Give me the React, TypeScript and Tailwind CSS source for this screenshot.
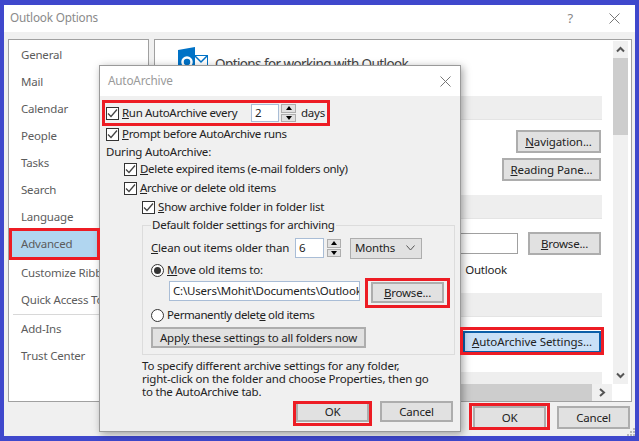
import React from "react";

const font = "font-['Noto_Sans',sans-serif]";

// ─── Small Win32-ish controls ────────────────────────────────────────────────

function Check() {
  return (
    <span className="w-[13px] h-[13px] shrink-0 border border-[#333] bg-white flex items-center justify-center">
      <svg width="11" height="11" viewBox="0 0 11 11" fill="none">
        <path d="M1 5.5 L4 8.5 L10 1.5" stroke="#444" strokeWidth="1.3" />
      </svg>
    </span>
  );
}

function Radio({ on }: { on?: boolean }) {
  return (
    <span className="w-[13px] h-[13px] shrink-0 rounded-full border border-[#333] bg-white flex items-center justify-center">
      {on && <span className="w-[7px] h-[7px] rounded-full bg-[#333]" />}
    </span>
  );
}

function Btn({ className, children }: { className: string; children: React.ReactNode }) {
  return (
    <div className={`flex items-center justify-center shrink-0 whitespace-nowrap border-2 border-[#adadad] bg-[#e1e1e1] text-[#222] ${className}`}>
      {children}
    </div>
  );
}

function Spinner({ className }: { className: string }) {
  return (
    <div className={`flex flex-col gap-px shrink-0 ${className}`}>
      <div className="flex-1 bg-[#e1e1e1] border border-[#adadad] flex items-center justify-center">
        <span className="w-0 h-0 border-x-[3px] border-x-transparent border-b-[4px] border-b-black" />
      </div>
      <div className="flex-1 bg-[#e1e1e1] border border-[#adadad] flex items-center justify-center">
        <span className="w-0 h-0 border-x-[3px] border-x-transparent border-t-[4px] border-t-black" />
      </div>
    </div>
  );
}

function CloseX({ color = "#777" }: { color?: string }) {
  return (
    <svg width="11" height="11" viewBox="0 0 11 11" fill="none">
      <path d="M0.5 0.5 L10.5 10.5 M10.5 0.5 L0.5 10.5" stroke={color} strokeWidth="1" />
    </svg>
  );
}

function Band({ className }: { className: string }) {
  return <div className={`w-[447px] h-[24px] shrink-0 bg-[#eeeeee] border-b border-[#e4e4e4] ${className}`} />;
}

// ─── Sidebar ─────────────────────────────────────────────────────────────────

function SideItem({ label, active }: { label: string; active?: boolean }) {
  return (
    <div className={`h-[27px] shrink-0 pl-[12px] flex items-center whitespace-nowrap text-[#5c5c5c] ${active ? "bg-[#b1d6f0] w-[85px] ml-[3px] !pl-[9px]" : ""}`}>
      {label}
    </div>
  );
}

function Sidebar() {
  return (
    <div className="w-[141px] h-[363px] shrink-0 border border-[#a0a0a0] bg-white pt-[1px] overflow-hidden">
      <div className="flex flex-col">
        {["General", "Mail", "Calendar", "People", "Tasks", "Search", "Language"].map((s) => (
          <SideItem key={s} label={s} />
        ))}
        <SideItem label="Advanced" active />
        <div className="h-[2px]" />
        <SideItem label="Customize Ribbon" />
        <SideItem label="Quick Access Toolbar" />
        <div className="h-px bg-[#d8d8d8] mx-[4px] mt-[1px]" />
        <SideItem label="Add-Ins" />
        <SideItem label="Trust Center" />
      </div>
    </div>
  );
}

// ─── Right-hand options panel ────────────────────────────────────────────────

function OptionsPanel() {
  return (
    <div className="w-[478px] h-[363px] shrink-0 border border-[#a0a0a0] bg-white ml-[5px] flex overflow-hidden">
      <div className="w-[458px] shrink-0 flex flex-col">
        <div className="h-[56px] shrink-0 flex pl-[23px] pt-[7px]">
          <svg width="30" height="30" viewBox="0 0 30 30" className="shrink-0">
            <rect x="16.5" y="8.5" width="13" height="13" fill="#fff" stroke="#0072c6" />
            <path d="M17 9 L23 15 L29 9" fill="none" stroke="#0072c6" strokeWidth="1.5" />
            <path d="M0 3 L17 0 V30 L0 27 Z" fill="#0072c6" />
            <circle cx="9" cy="15" r="4.5" fill="none" stroke="#fff" strokeWidth="2.5" />
          </svg>
          <span className="ml-[7px] mt-[7px] text-[13.5px] tracking-[-0.6px] text-[#444] whitespace-nowrap">Options for working with Outlook</span>
        </div>
        <Band className="" />
        <div className="flex flex-col items-end w-[446px] pt-[10px] gap-[5px]">
          <Btn className="w-[85px] h-[23px] tracking-[-0.1px]"><span><u>N</u>avigation...</span></Btn>
          <Btn className="w-[99px] h-[23px] tracking-[-0.1px]"><span><u>R</u>eading Pane...</span></Btn>
        </div>
        <Band className="mt-[14px]" />
        <div className="flex justify-end w-[446px] pt-[13px] gap-[10px]">
          <div className="w-[60px] h-[21px] mt-px border border-[#a0a0a0] bg-white" />
          <Btn className="w-[73px] h-[23px]"><span><u>B</u>rowse...</span></Btn>
        </div>
        <div className="w-[352px] text-right pt-[6px] h-[39px] text-[#222]">Outlook</div>
        <Band className="" />
        <div className="flex justify-end w-[446px] pt-[14px]">
          <div className="flex items-center justify-center w-[138px] h-[22px] border-2 border-[#0b5ea8] bg-[#c9e0f7] text-[#222] whitespace-nowrap tracking-[-0.05px]">
            <span><u>A</u>utoArchive Settings...</span>
          </div>
        </div>
        <div className="w-[447px] h-[12px] bg-[#eeeeee] mt-[19px] shrink-0" />
        <div className="w-[457px] h-[17px] shrink-0 flex bg-[#cdcdcd]">
          <div className="flex-1" />
          <div className="w-[20px] bg-[#f0f0f0] flex items-center justify-center">
            <svg width="7" height="9" viewBox="0 0 7 9" fill="none"><path d="M1 1 L5 4.5 L1 8" stroke="#555" strokeWidth="2" /></svg>
          </div>
        </div>
      </div>
      <div className="w-[15px] h-[343px] mt-px bg-[#f0f0f0] flex flex-col shrink-0">
        <div className="h-[17px] flex items-center justify-center">
          <svg width="9" height="7" viewBox="0 0 9 7" fill="none"><path d="M1 5.5 L4.5 2 L8 5.5" stroke="#555" strokeWidth="2" /></svg>
        </div>
        <div className="h-[77px] bg-[#cdcdcd]" />
        <div className="flex-1" />
        <div className="h-[17px] flex items-center justify-center">
          <svg width="9" height="7" viewBox="0 0 9 7" fill="none"><path d="M1 1.5 L4.5 5 L8 1.5" stroke="#555" strokeWidth="2" /></svg>
        </div>
      </div>
    </div>
  );
}

// ─── AutoArchive dialog ──────────────────────────────────────────────────────

function AutoArchiveDialog() {
  return (
    <div className="absolute left-[95px] top-[60px] w-[362px] h-[367px] border border-[#9a9a9a] bg-[#f0f0f0] shadow-[2px_2px_8px_rgba(0,0,0,0.35)] flex flex-col text-[#222]">
      <div className="h-[30px] shrink-0 bg-white flex items-center justify-between pl-[8px] pr-[9px]">
        <span className="text-[#9a9a9a] text-[11.75px]">AutoArchive</span>
        <CloseX />
      </div>
      <div className="flex flex-col pl-[6px]">
        <div className="h-[22px] mt-[6px] flex items-center gap-[3px]">
          <Check />
          <span className="w-[126px] whitespace-nowrap tracking-[-0.32px]"><u>R</u>un AutoArchive every</span>
          <div className="w-[28px] h-[18px] border border-[#a9bdd6] bg-white pl-[3px] leading-[16px]">2</div>
          <Spinner className="w-[15px] h-[18px] ml-[-1px]" />
          <span className="ml-[2px]">days</span>
        </div>
        <div className="h-[20px] flex items-center gap-[3px]">
          <Check />
          <span className="tracking-[-0.33px]"><u>P</u>rompt before AutoArchive runs</span>
        </div>
        <div className="h-[16px] flex items-center">During AutoArchive:</div>
        <div className="h-[18px] ml-[18px] flex items-center gap-[3px]">
          <Check />
          <span className="tracking-[-0.32px]"><u>D</u>elete expired items (e-mail folders only)</span>
        </div>
        <div className="h-[20px] ml-[18px] flex items-center gap-[3px]">
          <Check />
          <span className="tracking-[-0.3px]"><u>A</u>rchive or delete old items</span>
        </div>
        <div className="h-[18px] ml-[36px] flex items-center gap-[3px]">
          <Check />
          <span><u>S</u>how archive folder in folder list</span>
        </div>

        <div className="relative ml-[36px] mt-[9px] w-[313px] h-[130px] border border-[#dcdcdc] pl-[8px] flex flex-col">
          <span className="absolute left-[8px] top-[-9px] bg-[#f0f0f0] px-px leading-[16px] whitespace-nowrap tracking-[-0.25px]">Default folder settings for archiving</span>
          <div className="h-[22px] mt-[11px] flex items-center">
            <span className="w-[144px] whitespace-nowrap"><u>C</u>lean out items older than</span>
            <div className="w-[29px] h-[20px] border border-[#a9bdd6] bg-white pl-[3px] leading-[18px]">6</div>
            <Spinner className="w-[14px] h-[18px] ml-[3px]" />
            <div className="ml-[9px] w-[72px] h-[21px] border border-[#adadad] bg-[#e1e1e1] flex items-center justify-between pl-[4px] pr-[6px]">
              <span>Months</span>
              <svg width="9" height="6" viewBox="0 0 9 6" fill="none"><path d="M0.5 0.5 L4.5 5 L8.5 0.5" stroke="#555" /></svg>
            </div>
          </div>
          <div className="h-[22px] flex items-center gap-[3px]">
            <Radio on />
            <span><u>M</u>ove old items to:</span>
          </div>
          <div className="flex items-start ml-[18px] h-[22px]">
            <div className="w-[191px] h-[20px] border border-[#a9bdd6] bg-white pl-[3px] leading-[18px] whitespace-nowrap overflow-hidden">C:\Users\Mohit\Documents\Outlook</div>
            <Btn className="w-[73px] h-[21px] ml-[11px] mt-px"><span><u>B</u>rowse...</span></Btn>
          </div>
          <div className="h-[24px] flex items-center gap-[3px]">
            <Radio />
            <span className="tracking-[-0.4px]">Permanently delet<u>e</u> old items</span>
          </div>
          <Btn className="w-[215px] h-[21px]"><span>Appl<u>y</u> these settings to all folders now</span></Btn>
        </div>

        <div className="ml-[36px] mt-[4px] leading-[13px] whitespace-nowrap">
          To specify different archive settings for any folder,<br />
          right-click on the folder and choose Properties, then go<br />
          to the AutoArchive tab.
        </div>
        <div className="flex justify-end gap-[11px] pr-[7px] mt-[3px]">
          <Btn className="w-[73px] h-[21px]">OK</Btn>
          <Btn className="w-[73px] h-[21px]">Cancel</Btn>
        </div>
      </div>
    </div>
  );
}

// ─── Red annotation rectangles ───────────────────────────────────────────────

function Marker({ className }: { className: string }) {
  return <div className={`absolute border-[3px] border-[#ed1c24] pointer-events-none ${className}`} />;
}

export default function App() {
  return (
    <div className={`relative w-[639px] h-[441px] bg-[#3f48cc] pt-[5px] pl-[4px] pr-[4px] pb-[5px] overflow-hidden text-[11.5px] tracking-[-0.2px] ${font}`}>
      <div className="relative w-[631px] h-[431px] flex flex-col bg-[#f0f0f0]">
        <div className="h-[27px] shrink-0 bg-white flex items-center justify-between pl-[6px] pr-[15px] pb-px">
          <span className="text-[11.75px] text-[#8a8a8a]">Outlook Options</span>
          <div className="flex items-center gap-[36px]">
            <span className="text-[13px] text-[#888] leading-none">?</span>
            <CloseX />
          </div>
        </div>
        <div className="flex pl-[4px] pt-[7px]">
          <Sidebar />
          <OptionsPanel />
        </div>
        <div className="flex justify-end gap-[11px] pr-[5px] pt-[4px]">
          <Btn className="w-[73px] h-[23px]">OK</Btn>
          <Btn className="w-[73px] h-[23px]">Cancel</Btn>
        </div>
        <AutoArchiveDialog />
        <svg className="absolute right-0 bottom-0" width="8" height="8" viewBox="0 0 8 8" fill="#b8b8b8">
          <rect x="6" y="0" width="2" height="2" />
          <rect x="3" y="3" width="2" height="2" />
          <rect x="6" y="3" width="2" height="2" />
          <rect x="0" y="6" width="2" height="2" />
          <rect x="3" y="6" width="2" height="2" />
          <rect x="6" y="6" width="2" height="2" />
        </svg>
      </div>
      <Marker className="left-[9px] top-[228px] w-[91px] h-[32px]" />
      <Marker className="left-[102px] top-[100px] w-[228px] h-[26px]" />
      <Marker className="left-[365px] top-[278px] w-[85px] h-[30px]" />
      <Marker className="left-[460px] top-[327px] w-[144px] h-[28px]" />
      <Marker className="left-[293px] top-[401px] w-[79px] h-[25px]" />
      <Marker className="left-[469px] top-[403px] w-[81px] h-[27px]" />
    </div>
  );
}
